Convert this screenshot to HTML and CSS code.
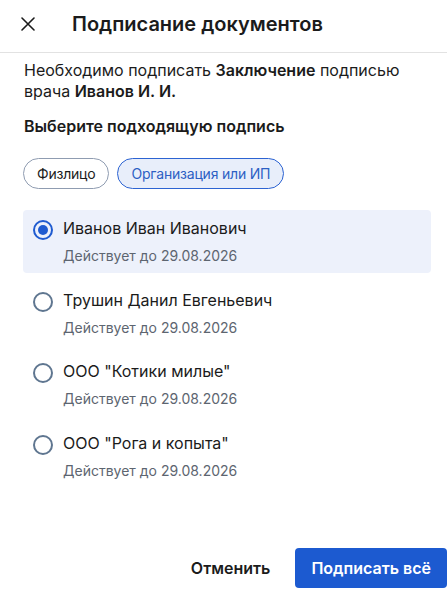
FILE: index.html
```html
<!DOCTYPE html>
<html lang="ru">
<head>
    <meta charset="UTF-8">
    <meta name="viewport" content="width=device-width, initial-scale=1.0">
    <title>Подписание документов</title>
    <link rel="stylesheet" href="styles.css">
</head>
<body>
    <div class="sheet">
        <header class="sheet-header">
            <button class="close-btn" aria-label="Закрыть">
                <svg width="14" height="14" viewBox="0 0 14 14">
                    <path d="M1 1L13 13M13 1L1 13" stroke="#1b1b1b" stroke-width="1.6" stroke-linecap="round"/>
                </svg>
            </button>
            <h1 class="sheet-title">Подписание документов</h1>
        </header>

        <main class="sheet-body">
            <p class="intro">
                Необходимо подписать <b>Заключение</b> подписью врача <b>Иванов И. И.</b>
            </p>

            <h2 class="section-title">Выберите подходящую подпись</h2>

            <div class="chips">
                <button class="chip">Физлицо</button>
                <button class="chip chip-active">Организация или ИП</button>
            </div>

            <div class="sign-list">
                <label class="sign-item selected">
                    <span class="radio"></span>
                    <span class="sign-info">
                        <span class="sign-name">Иванов Иван Иванович</span>
                        <span class="sign-date">Действует до 29.08.2026</span>
                    </span>
                </label>
                <label class="sign-item">
                    <span class="radio"></span>
                    <span class="sign-info">
                        <span class="sign-name">Трушин Данил Евгеньевич</span>
                        <span class="sign-date">Действует до 29.08.2026</span>
                    </span>
                </label>
                <label class="sign-item">
                    <span class="radio"></span>
                    <span class="sign-info">
                        <span class="sign-name">ООО "Котики милые"</span>
                        <span class="sign-date">Действует до 29.08.2026</span>
                    </span>
                </label>
                <label class="sign-item">
                    <span class="radio"></span>
                    <span class="sign-info">
                        <span class="sign-name">ООО "Рога и копыта"</span>
                        <span class="sign-date">Действует до 29.08.2026</span>
                    </span>
                </label>
            </div>
        </main>

        <footer class="sheet-footer">
            <button class="btn btn-ghost">Отменить</button>
            <button class="btn btn-primary">Подписать всё</button>
        </footer>
    </div>
</body>
</html>
```

FILE: styles.css
```css
* {
    margin: 0;
    padding: 0;
    box-sizing: border-box;
}

body {
    font-family: Inter, 'Noto Sans', sans-serif;
    color: #1b1b1b;
    background: #fff;
}

button {
    font-family: inherit;
    cursor: pointer;
}

.sheet {
    min-height: 100vh;
    display: flex;
    flex-direction: column;
}

/* Шапка */
.sheet-header {
    height: 53px;
    display: flex;
    align-items: center;
    border-bottom: 1px solid #e2e2e2;
    padding-bottom: 5px;
}

.close-btn {
    width: 14px;
    height: 14px;
    margin-left: 21px;
    margin-right: 37px;
    border: none;
    background: none;
    display: flex;
}

.sheet-title {
    font-size: 20px;
    font-weight: 600;
    line-height: 24px;
}

/* Контент */
.sheet-body {
    padding: 0 16px 0 23px;
}

.intro {
    margin-top: 7px;
    font-size: 16px;
    line-height: 21px;
    padding-left: 1px;
}

.intro b {
    font-weight: 600;
}

.section-title {
    margin-top: 14px;
    font-size: 16px;
    font-weight: 600;
    line-height: 21px;
    padding-left: 1px;
}

.chips {
    display: flex;
    gap: 8px;
    margin-top: 21px;
}

.chip {
    height: 31px;
    padding: 0 13px;
    border-radius: 16px;
    border: 1px solid #8f9cb1;
    background: #fff;
    color: #1b1b1b;
    font-size: 14px;
    letter-spacing: -0.2px;
}

.chip-active {
    border-color: #2c63d2;
    background: #e8eefa;
    color: #2c5fc4;
}

.sign-list {
    margin-top: 21px;
    display: flex;
    flex-direction: column;
    gap: 8.5px;
}

.sign-item {
    display: flex;
    gap: 10px;
    padding: 6px 10px 7px;
    border-radius: 4px;
    cursor: pointer;
}

.sign-item.selected {
    background: #edf1fb;
}

.radio {
    flex: none;
    width: 20px;
    height: 20px;
    margin-top: 4px;
    border-radius: 50%;
    border: 2px solid #5f7690;
    position: relative;
}

.selected .radio {
    border-color: #1f5bd0;
}

.selected .radio::after {
    content: '';
    position: absolute;
    inset: 3px;
    border-radius: 50%;
    background: #1f5bd0;
}

.sign-info {
    display: flex;
    flex-direction: column;
    gap: 6px;
}

.sign-name {
    font-size: 16px;
    line-height: 24px;
}

.sign-date {
    font-size: 14px;
    line-height: 20px;
    color: #5d6570;
}

/* Кнопки */
.sheet-footer {
    margin-top: auto;
    display: flex;
    justify-content: flex-end;
    gap: 9px;
    padding: 0 0 3px;
}

.btn {
    height: 40px;
    padding: 0 16px;
    border: none;
    border-radius: 4px;
    font-size: 16px;
    font-weight: 600;
}

.btn-ghost {
    background: none;
    color: #1b1b1b;
}

.btn-primary {
    background: #1c5ad0;
    color: #fff;
}
```
